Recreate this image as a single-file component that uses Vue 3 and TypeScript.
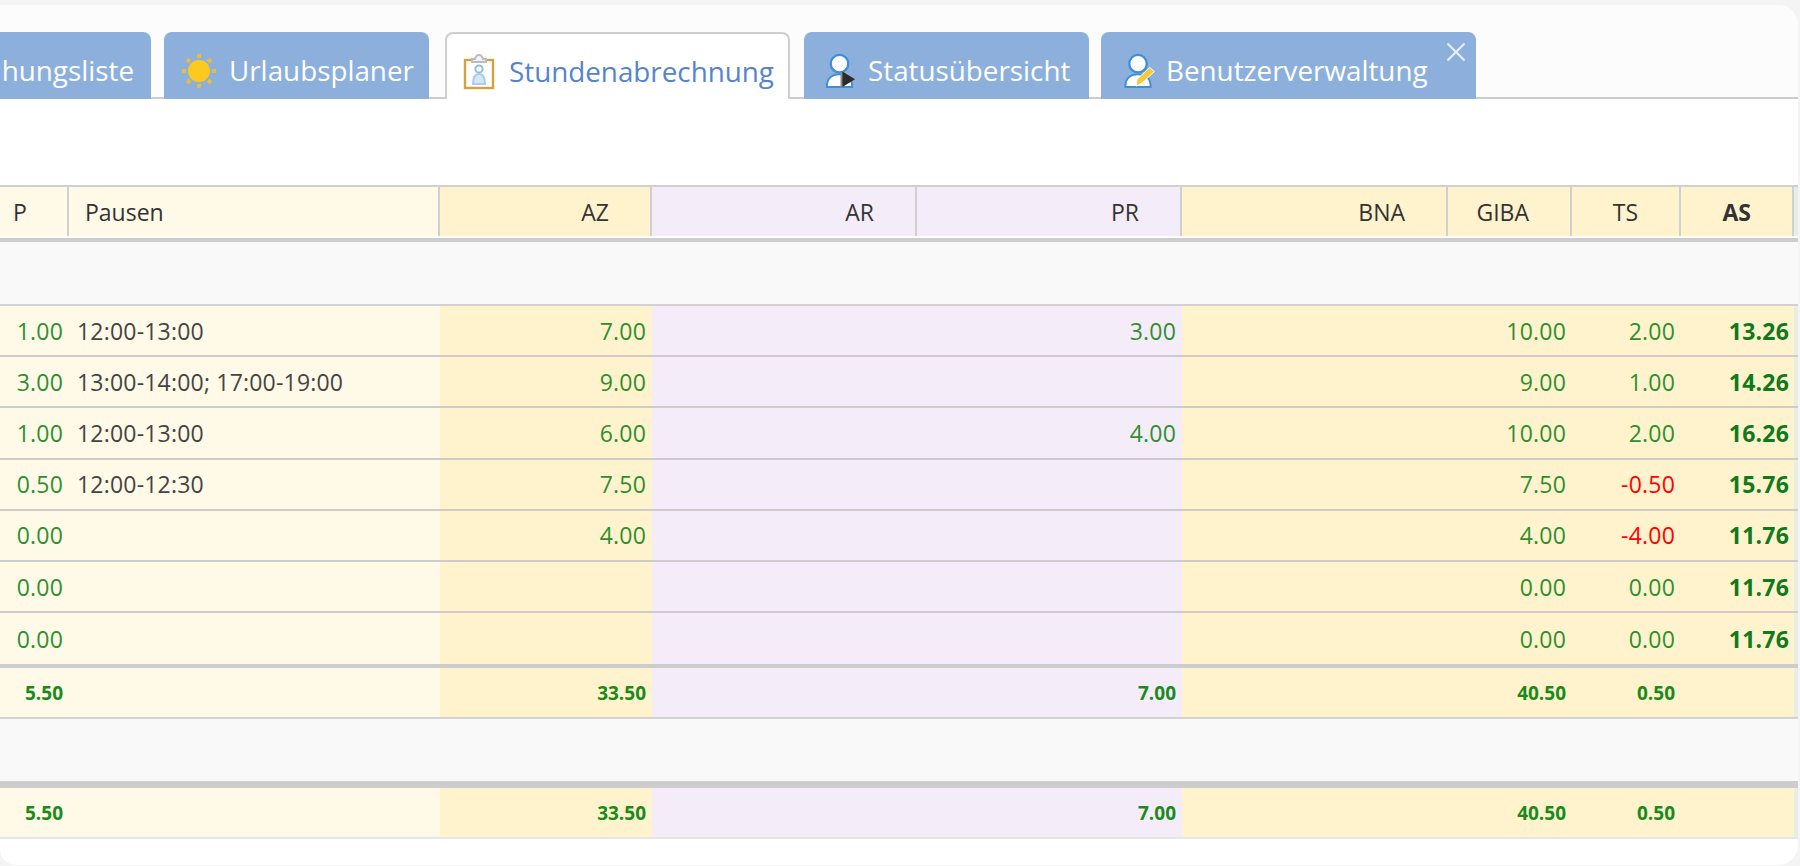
<script setup lang="ts">
interface Row { p: string; pausen: string; az: string; pr: string; giba: string; ts: string; as: string; neg?: boolean }
const rows: Row[] = [
  { p: '1.00', pausen: '12:00-13:00', az: '7.00', pr: '3.00', giba: '10.00', ts: '2.00', as: '13.26' },
  { p: '3.00', pausen: '13:00-14:00; 17:00-19:00', az: '9.00', pr: '', giba: '9.00', ts: '1.00', as: '14.26' },
  { p: '1.00', pausen: '12:00-13:00', az: '6.00', pr: '4.00', giba: '10.00', ts: '2.00', as: '16.26' },
  { p: '0.50', pausen: '12:00-12:30', az: '7.50', pr: '', giba: '7.50', ts: '-0.50', as: '15.76', neg: true },
  { p: '0.00', pausen: '', az: '4.00', pr: '', giba: '4.00', ts: '-4.00', as: '11.76', neg: true },
  { p: '0.00', pausen: '', az: '', pr: '', giba: '0.00', ts: '0.00', as: '11.76' },
  { p: '0.00', pausen: '', az: '', pr: '', giba: '0.00', ts: '0.00', as: '11.76' },
]
</script>

<template>
  <div class="card">
    <nav class="tabs">
      <div class="tab tab-first"><span>hungsliste</span></div>
      <div class="tab tab-urlaub">
        <svg class="ico" width="34" height="34" viewBox="0 0 34 34">
          <circle cx="17" cy="17" r="11" fill="#fdc91e" />
          <g stroke="#e3bd44" stroke-width="4">
            <path d="M17 0v4M17 30v4M0 17h4M30 17h4" />
            <path d="M5 5l3 3M26 26l3 3M5 29l3-3M26 8l3-3" />
          </g>
        </svg>
        <span>Urlaubsplaner</span>
      </div>
      <div class="tab active">
        <svg class="ico" width="32" height="36" viewBox="0 0 32 36">
          <rect x="2" y="6" width="28" height="28" fill="#fff" stroke="#d3a13e" stroke-width="2.4" />
          <path d="M9 8V5h3q1-4 4-4t4 4h3v3z" fill="#f4f4f4" stroke="#bcbcbc" stroke-width="2" />
          <circle cx="16" cy="15" r="3.6" fill="#fff" stroke="#8fbde6" stroke-width="2" />
          <path d="M10 30q0-10 6-10t6 10z" fill="#d5e7f6" stroke="#a9cdec" stroke-width="2" />
        </svg>
        <span>Stundenabrechnung</span>
      </div>
      <div class="tab tab-status">
        <svg class="ico" width="34" height="35" viewBox="0 0 33 36">
          <path d="M3 35q0-13 13-13t13 13z" fill="#fff" stroke="#3f8fd6" stroke-width="2" />
          <circle cx="16" cy="11" r="9" fill="#fff" stroke="#3f8fd6" stroke-width="2.4" />
          <rect x="17" y="20" width="3" height="15" fill="#8a8a8a" />
          <path d="M19 19l13 8-13 8z" fill="#2b2b2b" />
        </svg>
        <span>Statusübersicht</span>
      </div>
      <div class="tab tab-user">
        <svg class="ico" width="34" height="35" viewBox="0 0 34 36">
          <path d="M3 35q0-13 13-13t13 13z" fill="#fff" stroke="#3f8fd6" stroke-width="2" />
          <circle cx="16" cy="11" r="9" fill="#fff" stroke="#3f8fd6" stroke-width="2.4" />
          <path d="M14 34l1-7 13-12 5 4-13 12z" fill="#f6c83c" stroke="#fff" stroke-width="1" />
        </svg>
        <span>Benutzerverwaltung</span>
        <svg class="close" width="18" height="18" viewBox="0 0 18 18">
          <path d="M.5.5l17 17M17.5.5l-17 17" stroke="#e9f0fa" stroke-width="2" />
        </svg>
      </div>
    </nav>

    <div class="toolbar"></div>

    <div class="grid head">
      <div class="c pale hd hd-p">P</div>
      <div class="c pale hd hd-l">Pausen</div>
      <div class="c yellow hd hd-r">AZ</div>
      <div class="c lilac hd hd-r">AR</div>
      <div class="c lilac hd hd-r">PR</div>
      <div class="c yellow hd hd-r">BNA</div>
      <div class="c yellow hd hd-r">GIBA</div>
      <div class="c yellow hd hd-r">TS</div>
      <div class="c yellow hd hd-r strong">AS</div>
    </div>
    <div class="thick"></div>
    <div class="blank"></div>
    <div class="thin"></div>

    <div v-for="(r, i) in rows" :key="i" class="grid row" :class="{ 'no-line': i === rows.length - 1 }">
      <div class="c pale num">{{ r.p }}</div>
      <div class="c pale txt">{{ r.pausen }}</div>
      <div class="c yellow num">{{ r.az }}</div>
      <div class="c lilac num"></div>
      <div class="c lilac num">{{ r.pr }}</div>
      <div class="c yellow num"></div>
      <div class="c yellow num">{{ r.giba }}</div>
      <div class="c yellow num" :class="{ neg: r.neg }">{{ r.ts }}</div>
      <div class="c yellow num bold">{{ r.as }}</div>
    </div>

    <div class="thick-b"></div>
    <div class="grid total">
      <div class="c pale num">5.50</div>
      <div class="c pale"></div>
      <div class="c yellow num">33.50</div>
      <div class="c lilac"></div>
      <div class="c lilac num">7.00</div>
      <div class="c yellow"></div>
      <div class="c yellow num">40.50</div>
      <div class="c yellow num">0.50</div>
      <div class="c yellow"></div>
    </div>
    <div class="thin"></div>
    <div class="blank"></div>
    <div class="thick-c"></div>
    <div class="grid total">
      <div class="c pale num">5.50</div>
      <div class="c pale"></div>
      <div class="c yellow num">33.50</div>
      <div class="c lilac"></div>
      <div class="c lilac num">7.00</div>
      <div class="c yellow"></div>
      <div class="c yellow num">40.50</div>
      <div class="c yellow num">0.50</div>
      <div class="c yellow"></div>
    </div>
    <div class="thin-end"></div>
  </div>
</template>

<style>
html, body { margin: 0; background: #f4f4f4; overflow: hidden; }
</style>

<style scoped>
.card {
  box-sizing: border-box;
  width: 1798px;
  height: 860px;
  margin-top: 5px;
  background: #fff;
  border-radius: 0 20px 20px 16px;
  overflow: hidden;
  font-family: "Open Sans", "Noto Sans", sans-serif;
}
.tabs {
  display: flex;
  align-items: flex-end;
  height: 94px;
  box-sizing: border-box;
  padding-top: 27px;
  background: #fcfcfc;
  border-bottom: 2px solid #cccccc;
}
.tab {
  box-sizing: border-box;
  height: 67px;
  margin-bottom: -2px;
  display: flex;
  align-items: center;
  background: #8cafdc;
  color: #fff;
  font-size: 27.8px;
  border-radius: 8px 8px 0 0;
  white-space: nowrap;
  position: relative;
  flex: none;
}
.tab span { position: relative; top: 4px; }
.ico { position: relative; top: 5px; flex: none; }
.tab-first { width: 151px; margin-right: 13px; justify-content: flex-end; padding-right: 17px; border-radius: 0 8px 0 0; }
.tab-urlaub { width: 265px; margin-right: 16px; padding-left: 18px; gap: 13px; }
.active {
  width: 345px;
  margin-right: 14px;
  padding-left: 16px;
  gap: 14px;
  background: #fff;
  color: #5584ce;
  border: 2px solid #cfcfcf;
  border-bottom: 0;
}
.tab-status { width: 285px; margin-right: 12px; padding-left: 19px; gap: 11px; }
.tab-user { width: 375px; padding-left: 21px; gap: 10px; }
.close { position: absolute; top: 11px; right: 11px; }
.toolbar { height: 86px; }

.grid {
  display: grid;
  grid-template-columns: 69px 371px 212px 265px 265px 266px 124px 109px 113px;
  width: 1798px;
  background: #e5efe7;
}
.head {
  height: 49px;
  border-top: 2px solid #d0d0d0;
}
.c { min-width: 0; white-space: nowrap; }
.pale { background: #fff9e8; }
.yellow { background: #fff3cd; }
.lilac { background: #f4edf9; }
.hd {
  display: flex;
  align-items: center;
  font-size: 23px;
  color: #333;
  border-right: 2px solid #d0d0d0;
  box-sizing: border-box;
}
.hd-p { padding-left: 13px; }
.hd-l { padding-left: 16px; }
.hd-r { justify-content: flex-end; padding-right: 41px; }
.strong { font-weight: 700; }
.thick { height: 4px; margin-top: 2px; background: #cdcdcd; width: 1798px; }
.blank { height: 62px; background: #f9f9f9; width: 1798px; }
.thin { height: 2px; background: #d2d2d2; width: 1798px; }
.row { height: 51.2px; box-sizing: border-box; border-bottom: 2px solid #cccccc; }
.row.no-line { border-bottom: 0; }
.row .c, .total .c {
  display: flex;
  align-items: center;
}
.num {
  justify-content: flex-end;
  padding-right: 6px;
  box-sizing: border-box;
  color: #2f8f2f;
  font-size: 23px;
  letter-spacing: 0.2px;
}
.txt { padding-left: 8px; font-size: 23px; letter-spacing: 0.2px; color: #444; }
.neg { color: #f00; }
.bold { font-weight: 700; color: #0f7a1c; padding-right: 5px; }
.thick-b { height: 4px; background: #cdcdcd; width: 1798px; }
.total { height: 49px; }
.total .num { font-size: 19px; font-weight: 700; letter-spacing: 0; color: #1a8a1a; }
.thick-c { height: 7px; background: #cdcdcd; width: 1798px; }
.thin-end { height: 2px; background: #e6e6e6; width: 1798px; }
</style>
